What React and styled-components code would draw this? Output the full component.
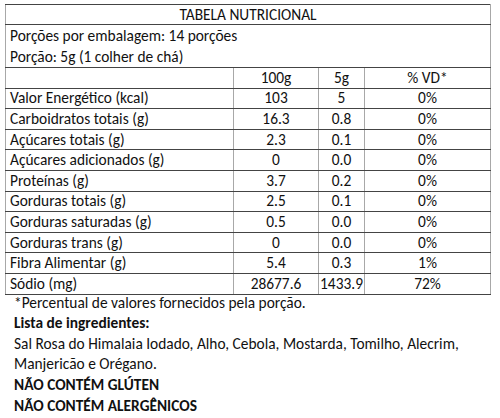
import React from "react";
import styled, { createGlobalStyle } from "styled-components";

const Global = createGlobalStyle`
  html, body { margin: 0; padding: 0; background: #fff; }
  body { font-family: Carlito, Lato, "Liberation Sans", sans-serif; color: #111; }
`;

const Page = styled.div`
  padding: 4px 0 0 5px;
  width: 500px;
  box-sizing: border-box;
`;

const Table = styled.table`
  border-collapse: collapse;
  table-layout: fixed;
  width: 486px;
  font-size: 15.4px;
  border: 1px solid #555;
`;

const Cell = styled.td`
  padding: 0 0 0 ${(p) => (p.$align === "left" ? "4px" : "0")};
  text-align: ${(p) => p.$align || "center"};
  height: ${(p) => p.$h || 19.6}px;
  line-height: 16px;
  border-top: 1px solid ${(p) => p.$topColor || "#444"};
  border-bottom: 1px solid #444;
  border-left: 1px solid #a8a8a8;
  border-right: 1px solid #a8a8a8;
  white-space: nowrap;
  vertical-align: middle;
`;

const InfoLine = styled.div`
  line-height: 21px;
`;

const Notes = styled.div`
  margin-top: -2px;
  padding-left: 9px;
  font-size: 15.4px;
  line-height: 20.6px;
`;

const Bold = styled.div`
  font-weight: 700;
`;

const rows = [
  ["Valor Energético (kcal)", "103", "5", "0%"],
  ["Carboidratos totais (g)", "16.3", "0.8", "0%"],
  ["Açúcares totais (g)", "2.3", "0.1", "0%"],
  ["Açúcares adicionados (g)", "0", "0.0", "0%"],
  ["Proteínas (g)", "3.7", "0.2", "0%"],
  ["Gorduras totais (g)", "2.5", "0.1", "0%"],
  ["Gorduras saturadas (g)", "0.5", "0.0", "0%"],
  ["Gorduras trans (g)", "0", "0.0", "0%"],
  ["Fibra Alimentar (g)", "5.4", "0.3", "1%"],
  ["Sódio (mg)", "28677.6", "1433.9", "72%"],
];

export default function App() {
  return (
    <Page>
      <Global />
      <Table>
        <colgroup>
          <col style={{ width: 228 }} />
          <col style={{ width: 85 }} />
          <col style={{ width: 46 }} />
          <col style={{ width: 126 }} />
        </colgroup>
        <tbody>
          <tr>
            <Cell colSpan={4} $h={19}>TABELA NUTRICIONAL</Cell>
          </tr>
          <tr>
            <Cell colSpan={4} $align="left" $h={41} $topColor="#999">
              <InfoLine>Porções por embalagem: 14 porções</InfoLine>
              <InfoLine>Porção: 5g (1 colher de chá)</InfoLine>
            </Cell>
          </tr>
          <tr>
            <Cell />
            <Cell>100g</Cell>
            <Cell>5g</Cell>
            <Cell>% VD*</Cell>
          </tr>
          {rows.map((r) => (
            <tr key={r[0]}>
              <Cell $align="left">{r[0]}</Cell>
              <Cell>{r[1]}</Cell>
              <Cell>{r[2]}</Cell>
              <Cell>{r[3]}</Cell>
            </tr>
          ))}
        </tbody>
      </Table>
      <Notes>
        <div>*Percentual de valores fornecidos pela porção.</div>
        <Bold>Lista de ingredientes:</Bold>
        <div>Sal Rosa do Himalaia Iodado, Alho, Cebola, Mostarda, Tomilho, Alecrim,</div>
        <div>Manjericão e Orégano.</div>
        <Bold>NÃO CONTÉM GLÚTEN</Bold>
        <Bold>NÃO CONTÉM ALERGÊNICOS</Bold>
      </Notes>
    </Page>
  );
}
